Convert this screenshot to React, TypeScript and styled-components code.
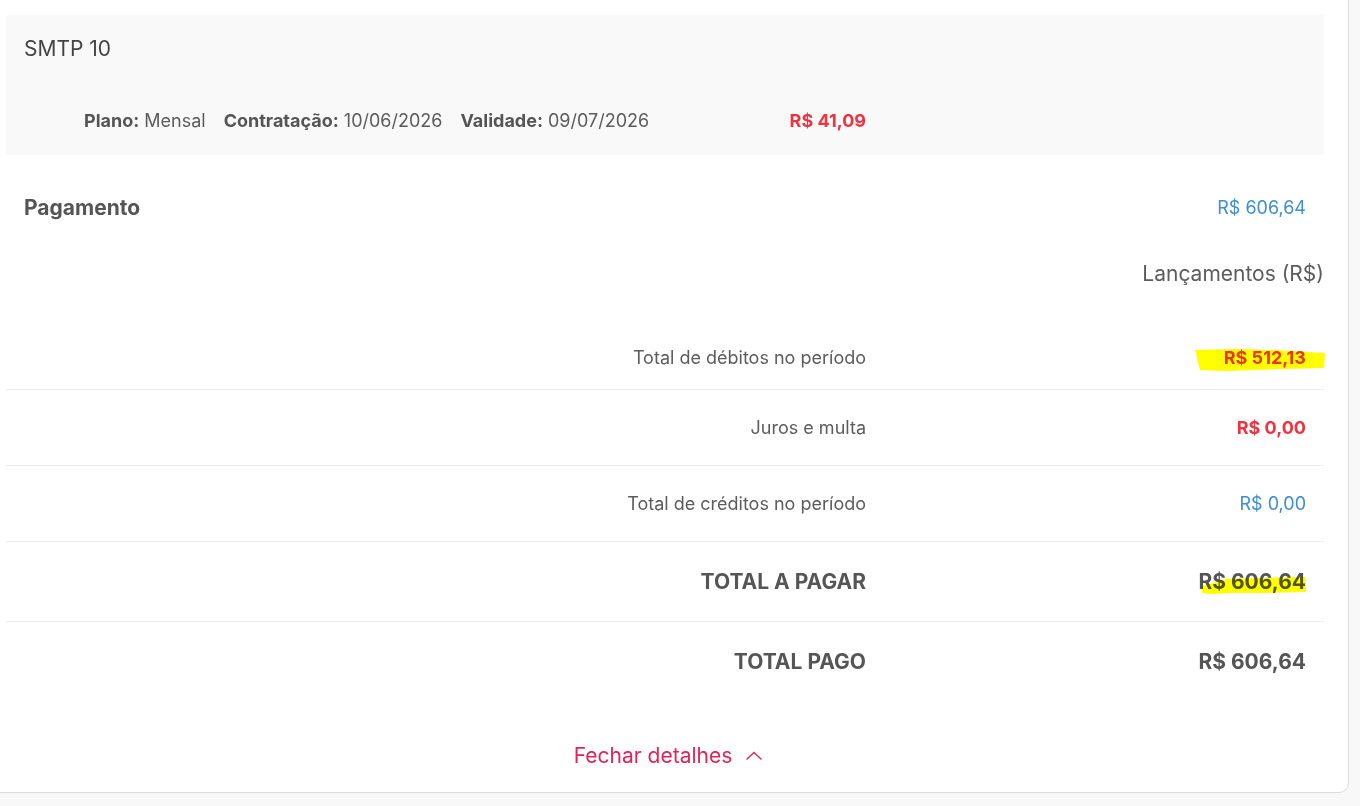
import React from "react";
import styled, { createGlobalStyle } from "styled-components";

const GlobalStyle = createGlobalStyle`
  html, body {
    margin: 0;
    padding: 0;
    background: #f8f8f8;
  }
  body {
    font-family: Inter, "Noto Sans", "Liberation Sans", sans-serif;
    color: #5c5c5c;
    -webkit-font-smoothing: antialiased;
  }
`;

const RED = "#ef3340";
const BLUE = "#3f8ed0";
const PINK = "#e0245a";

interface Entry {
  label: string;
  value: string;
  tone: "red" | "blue" | "dark";
  total?: boolean;
  marker?: "debit" | "total";
}

const entries: Entry[] = [
  { label: "Total de débitos no período", value: "R$ 512,13", tone: "red", marker: "debit" },
  { label: "Juros e multa", value: "R$ 0,00", tone: "red" },
  { label: "Total de créditos no período", value: "R$ 0,00", tone: "blue" },
  { label: "TOTAL A PAGAR", value: "R$ 606,64", tone: "dark", total: true, marker: "total" },
  { label: "TOTAL PAGO", value: "R$ 606,64", tone: "dark", total: true },
];

const toneColor = (tone: Entry["tone"]) =>
  tone === "red" ? RED : tone === "blue" ? BLUE : "#555555";

const Shell = styled.div`
  min-height: 100vh;
  box-sizing: border-box;
  padding: 0 11px 13px 0;
  display: flex;
  align-items: flex-start;
`;

const Card = styled.section`
  width: 1350px;
  margin: -1px 0 0 -1px;
  background: #fff;
  border: 1px solid #dcdcdc;
  border-radius: 0 0 10px 0;
  padding: 15px 24px 24px 6px;
  box-sizing: border-box;
  display: flex;
  flex-direction: column;
`;

const Plan = styled.div`
  background: #f9f9f9;
  padding: 22px 0 22px 18px;
  display: flex;
  flex-direction: column;
  gap: 48px;
`;

const PlanName = styled.h2`
  margin: 0;
  font-size: 21px;
  line-height: 24px;
  font-weight: 400;
  color: #444;
`;

const Grid = styled.div`
  display: grid;
  grid-template-columns: 1fr 440px;
  align-items: center;
`;

const PlanInfo = styled.div`
  display: flex;
  align-items: center;
  justify-content: space-between;
  padding: 0 18px 0 60px;
  font-size: 18px;
  line-height: 24px;
`;

const Facts = styled.div`
  display: flex;
  gap: 18px;
`;

const Fact = styled.span`
  white-space: nowrap;
  b {
    font-weight: 700;
    color: #555;
  }
`;

const Price = styled.span<{ $color: string }>`
  font-weight: 700;
  color: ${(p) => p.$color};
`;

const PaymentHead = styled.div`
  display: flex;
  justify-content: space-between;
  align-items: center;
  padding: 41px 18px 0 18px;
  font-size: 18px;
  line-height: 24px;
`;

const SectionTitle = styled.h3`
  margin: 0;
  font-size: 21px;
  font-weight: 700;
  color: #555;
`;

const Amount = styled.span<{ $color: string; $bold?: boolean }>`
  position: relative;
  display: inline-block;
  color: ${(p) => p.$color};
  font-weight: ${(p) => (p.$bold ? 700 : 400)};
`;

const Caption = styled.div`
  text-align: right;
  font-size: 21px;
  line-height: 24px;
  padding-top: 42px;
`;

const Rows = styled.div`
  margin-top: 39px;
  display: flex;
  flex-direction: column;
`;

const Row = styled(Grid)<{ $total?: boolean; $first?: boolean }>`
  height: ${(p) => (p.$first ? 64 : p.$total ? 80 : 76)}px;
  padding-top: ${(p) => (p.$first ? 1 : 0)}px;
  border-top: ${(p) => (p.$first ? "none" : "1px solid #ebebeb")};
  box-sizing: border-box;
  font-size: ${(p) => (p.$total ? 21 : 18)}px;
  line-height: 24px;
`;

const Cell = styled.div<{ $bold?: boolean }>`
  text-align: right;
  padding: 0 18px;
  font-weight: ${(p) => (p.$bold ? 700 : 400)};
  color: ${(p) => (p.$bold ? "#555" : "#5c5c5c")};
`;

const Marker = styled.svg`
  position: absolute;
  mix-blend-mode: multiply;
  pointer-events: none;
`;

const Footer = styled.div`
  display: flex;
  justify-content: center;
  padding: 43px 0 0 6px;
`;

const Toggle = styled.button`
  display: inline-flex;
  align-items: center;
  gap: 14px;
  background: none;
  border: none;
  padding: 0;
  font: inherit;
  font-size: 21px;
  line-height: 24px;
  color: ${PINK};
  cursor: pointer;
`;

// hand-drawn highlighter strokes laid over an amount
const HighlightStroke: React.FC<{ kind: "debit" | "total" }> = ({ kind }) =>
  kind === "debit" ? (
    <Marker width="130" height="24" viewBox="0 0 130 24" style={{ left: -29, top: 2 }}>
      <polygon points="0,2 40,1 80,2 130,5 129,20 90,21 60,22 30,23 5,22" fill="#ffff00" />
    </Marker>
  ) : (
    <Marker width="104" height="18" viewBox="0 0 104 18" style={{ left: 4, top: 7 }}>
      <polygon points="0,9 25,2 60,1 103,0 104,15 60,16 30,16 10,17 0,16" fill="#ffff00" />
    </Marker>
  );

const ChevronUp = () => (
  <svg width="16" height="10" viewBox="0 0 16 10" fill="none">
    <polyline points="0.5,8.5 8,1.5 15.5,8.5" stroke={PINK} strokeWidth="1.4" />
  </svg>
);

export default function App() {
  return (
    <>
      <GlobalStyle />
      <Shell>
        <Card>
          <Plan>
            <PlanName>SMTP 10</PlanName>
            <Grid>
              <PlanInfo>
                <Facts>
                  <Fact>
                    <b>Plano:</b> Mensal
                  </Fact>
                  <Fact>
                    <b>Contratação:</b> 10/06/2026
                  </Fact>
                  <Fact>
                    <b>Validade:</b> 09/07/2026
                  </Fact>
                </Facts>
                <Price $color={RED}>R$ 41,09</Price>
              </PlanInfo>
            </Grid>
          </Plan>

          <PaymentHead>
            <SectionTitle>Pagamento</SectionTitle>
            <Amount $color={BLUE}>R$ 606,64</Amount>
          </PaymentHead>

          <Caption>Lançamentos (R$)</Caption>

          <Rows>
            {entries.map((e, i) => (
              <Row key={e.label} $first={i === 0} $total={e.total}>
                <Cell $bold={e.total}>{e.label}</Cell>
                <Cell>
                  <Amount $color={toneColor(e.tone)} $bold={e.tone !== "blue"}>
                    {e.value}
                    {e.marker && <HighlightStroke kind={e.marker} />}
                  </Amount>
                </Cell>
              </Row>
            ))}
          </Rows>

          <Footer>
            <Toggle>
              Fechar detalhes
              <ChevronUp />
            </Toggle>
          </Footer>
        </Card>
      </Shell>
    </>
  );
}
